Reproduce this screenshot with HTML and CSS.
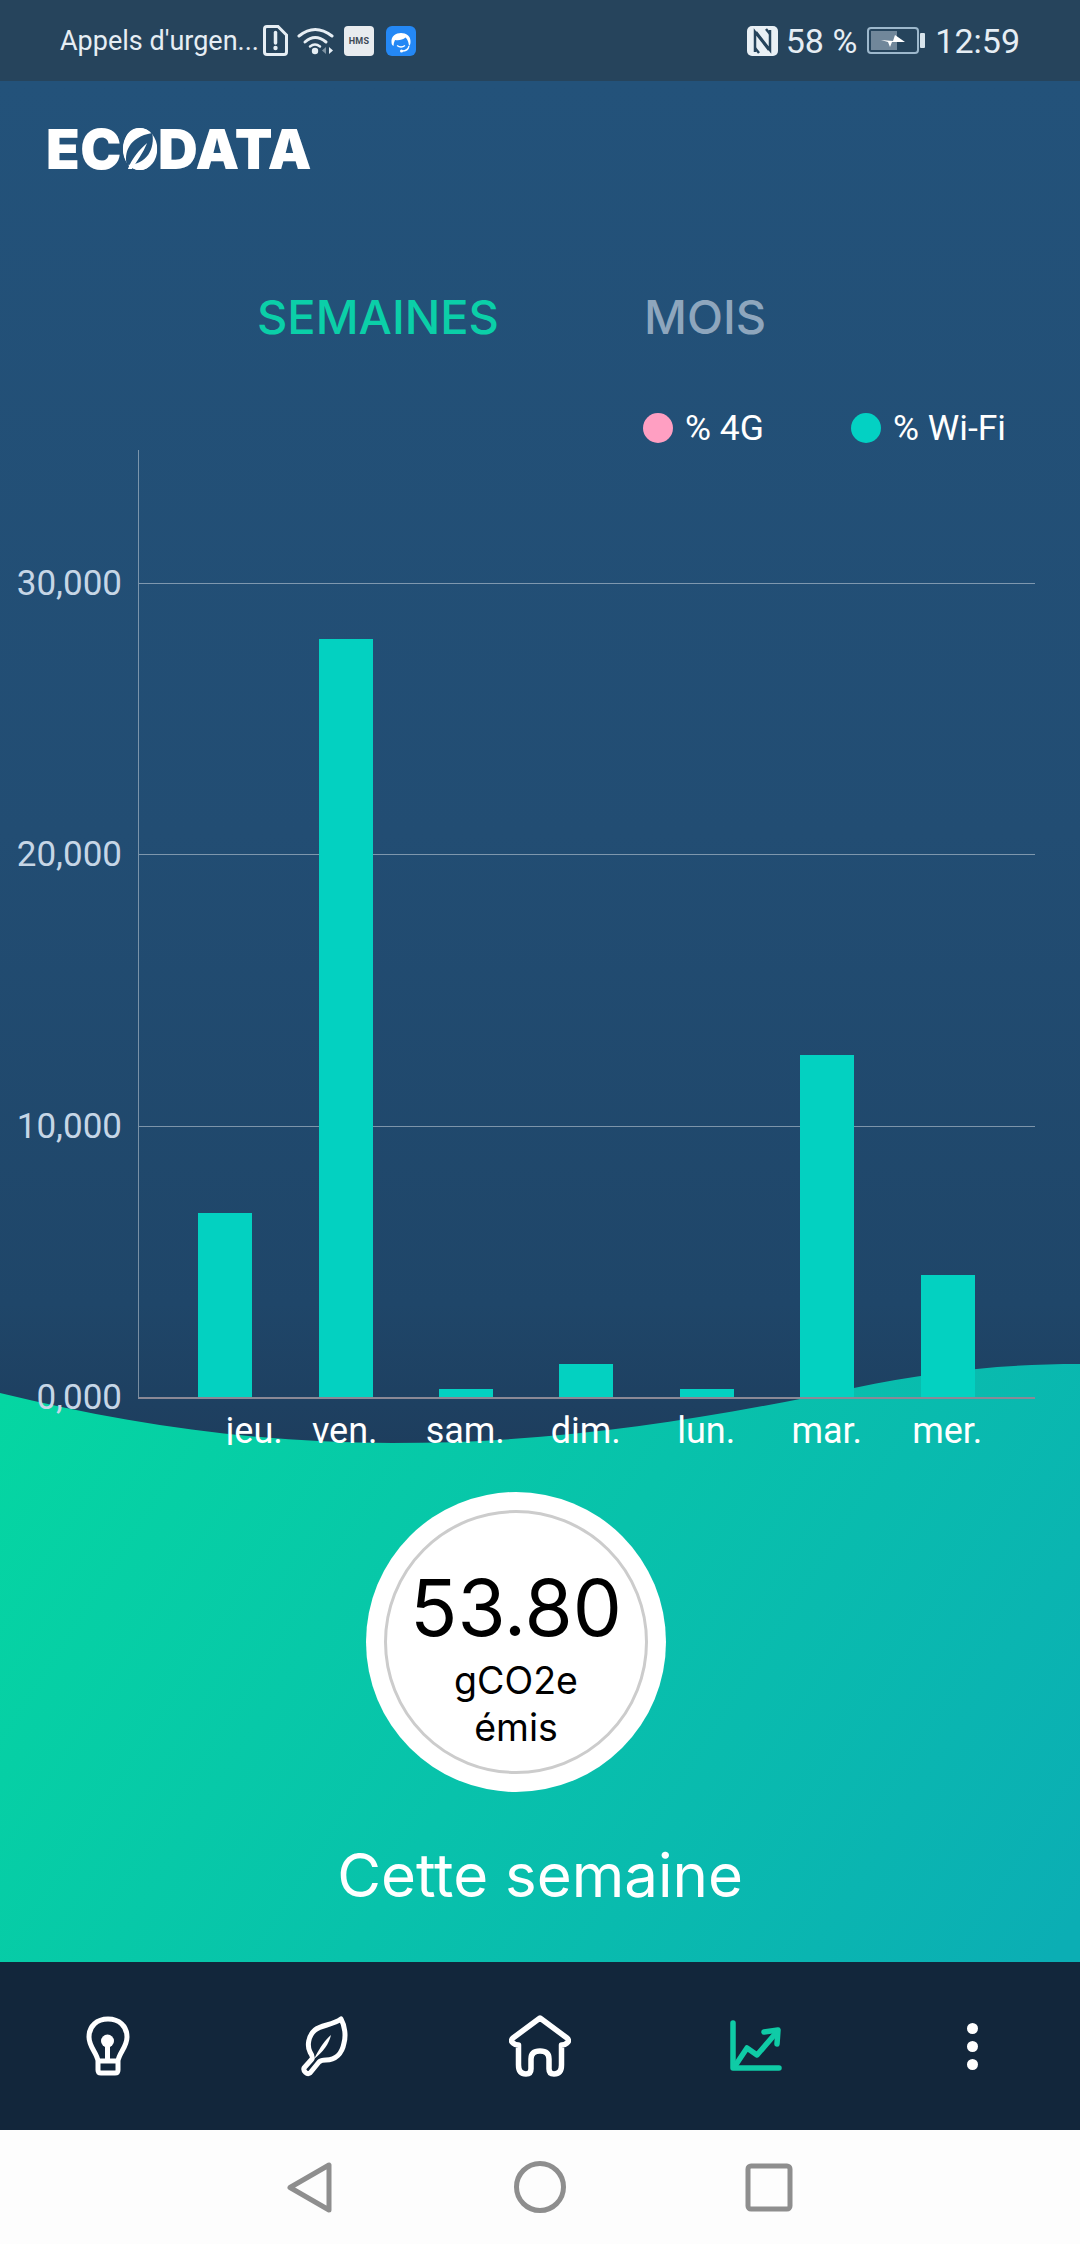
FILE: index.html
```html
<!DOCTYPE html>
<html lang="fr">
<head>
<meta charset="utf-8">
<title>Ecodata</title>
<link rel="stylesheet" href="styles.css">
</head>
<body>
<div class="phone">
  <div class="status">
    <div class="status-left">
      <span class="carrier">Appels d'urgen...</span>
      <svg class="ic-sim" viewBox="0 0 25 31"><path d="M4 1.5H15L23.5 10V27Q23.5 29.500 21 29.500H4Q1.500 29.500 1.500 27V4Q1.500 1.500 4 1.500Z" fill="none" stroke="#e6eef4" stroke-width="3"/><path d="M12.500 7.500V18" stroke="#e6eef4" stroke-width="3.500" stroke-linecap="round"/><circle cx="12.500" cy="23" r="2.200" fill="#e6eef4"/></svg>
      <svg class="ic-wifi" viewBox="0 0 37 29"><g fill="none" stroke="#e6eef4" stroke-width="3" stroke-linecap="round"><path d="M2 10Q18 -3 35 10"/><path d="M8 16Q18 7 29 16"/></g><path d="M13 20.500Q18 16.500 23 20.500" fill="none" stroke="#e6eef4" stroke-width="2.500" stroke-linecap="round"/><circle cx="18" cy="25" r="3.200" fill="#e6eef4"/><path d="M29 21V28L25 24.500Z" fill="#7f93a3"/><path d="M32 21V28L36 24.500Z" fill="#e6eef4"/></svg>
      <span class="ic-hms">HMS</span>
      <svg class="ic-app" viewBox="0 0 30 30"><rect width="30" height="30" rx="6" fill="#2488f5"/><path d="M5.500 16C4.500 4 25.500 4 24.500 16C24.500 18 24 19 23 20C22.500 15 21 13 19.500 11.500C17 14 12.500 14.500 9 14C8 16 7.500 18 7.500 20C6 19 5.500 18 5.500 16Z" fill="#fff"/><path d="M11 19.500Q15 22.500 19 19.500" fill="none" stroke="#fff" stroke-width="1.300"/><path d="M23 20Q22 25 16 25" fill="none" stroke="#fff" stroke-width="1.300"/><circle cx="15.500" cy="25" r="1.500" fill="#fff"/></svg>
    </div>
    <div class="status-right">
      <svg class="ic-nfc" viewBox="0 0 31 30"><rect width="31" height="30" rx="5" fill="#e9f0f5"/><g fill="none" stroke="#26445c" stroke-width="2.500"><path d="M8 26V6L22 24"/><path d="M12 27L8 22"/><path d="M23 4V24L9 6"/><path d="M19 3L23 8"/></g></svg>
      <span class="pct">58 %</span>
      <div class="battery"><div class="battery-body"><span class="battery-fill"></span><svg class="ic-bolt" viewBox="0 0 24 12"><path d="M0 5L12 6L14 0L24 7L11 7L9 12L7 7Z" fill="#fff"/></svg></div><span class="battery-nub"></span></div>
      <span class="clock">12:59</span>
    </div>
  </div>

  <main class="screen">
    <svg class="wave" viewBox="0 0 1080 1881" preserveAspectRatio="none">
      <defs><linearGradient id="waveFill" x1="0" y1="1320" x2="1000" y2="1960" gradientUnits="userSpaceOnUse"><stop offset="0" stop-color="#05d6a2"/><stop offset="1" stop-color="#0baeb4"/></linearGradient></defs>
      <path d="M0 1312C130 1344 260 1362 392 1362C560 1362 700 1339 854 1307C930 1291 1000 1283 1080 1283V1881H0Z" fill="url(#waveFill)"/>
    </svg>

    <div class="brand">EC<span class="brand-o">O<svg class="brand-leaf" viewBox="0 0 34 42" preserveAspectRatio="none"><ellipse cx="17" cy="21" rx="17" ry="21" fill="#fff"/><path d="M4 37C1 26 5 9 29 5C32 20 24 37 4 37Z" fill="#23527a"/><path d="M5 41C9 31 15 23 24 15C20 25 14 33 9 41Z" fill="#fff"/></svg></span>DATA</div>

    <div class="tabs">
      <span class="tab tab-active">SEMAINES</span>
      <span class="tab tab-idle">MOIS</span>
    </div>

    <div class="legend">
      <span class="legend-item legend-4g"><i class="dot dot-pink"></i>% 4G</span>
      <span class="legend-item"><i class="dot dot-teal"></i>% Wi-Fi</span>
    </div>

    <div class="chart">
      <div class="yaxis">
        <span>30,000</span><span>20,000</span><span>10,000</span><span>0,000</span>
      </div>
      <div class="plot">
        <div class="gridlines"><span></span><span></span><span></span></div>
        <div class="bar-cell"><span class="bar" style="height:184px"></span></div>
        <div class="bar-cell"><span class="bar" style="height:758px"></span></div>
        <div class="bar-cell"><span class="bar" style="height:8px"></span></div>
        <div class="bar-cell"><span class="bar" style="height:33px"></span></div>
        <div class="bar-cell"><span class="bar" style="height:8px"></span></div>
        <div class="bar-cell"><span class="bar" style="height:342px"></span></div>
        <div class="bar-cell"><span class="bar" style="height:122px"></span></div>
      </div>
    </div>

    <div class="xaxis">
      <span class="xlabel xlabel-first">jeu.</span>
      <span class="xlabel">ven.</span>
      <span class="xlabel">sam.</span>
      <span class="xlabel">dim.</span>
      <span class="xlabel">lun.</span>
      <span class="xlabel">mar.</span>
      <span class="xlabel">mer.</span>
    </div>

    <div class="stat">
      <div class="stat-ring">
        <span class="stat-value">53.80</span>
        <span class="stat-unit stat-unit-first">gCO2e</span>
        <span class="stat-unit">émis</span>
      </div>
    </div>

    <div class="caption">Cette semaine</div>
  </main>

  <nav class="nav">
    <div class="nav-item">
      <svg class="ic-bulb" viewBox="0 0 44 60"><g fill="none" stroke="#fff" stroke-width="5" stroke-linejoin="round"><path d="M12 45C11 37 3 31 3 21C3 10 11 3 22 3C33 3 41 10 41 21C41 31 33 37 32 45V54Q32 57 29 57H15Q12 57 12 54Z"/><path d="M12 45H32M21.500 30V45"/></g><circle cx="21.500" cy="25" r="6.500" fill="#fff"/></svg>
    </div>
    <div class="nav-item">
      <svg class="ic-leaf" viewBox="0 0 47 61"><path d="M40 3C44 10 45 20 43 27C41 38 34 44 25 44C22 44 20 44 18 46L9 57C6 59 2 55 3 52L11 43C12 41 11 39 9 36C6 30 7 20 14 14C20 9 32 9 40 3Z" fill="none" stroke="#fff" stroke-width="5" stroke-linejoin="round"/><path d="M13 43C19 31 24 24 30 19C28 28 22 36 13 43Z" fill="#fff"/></svg>
    </div>
    <div class="nav-item">
      <svg class="ic-house" viewBox="0 0 62 62"><path d="M31 3L4 23Q1 26 4 28Q6 30 9.500 30V50Q9.500 59 17 59Q22 59 22 54V44Q22 36 31 36Q40 36 40 44V54Q40 59 45 59Q52.500 59 52.500 50V30Q56 30 58 28Q61 26 58 23Z" fill="none" stroke="#fff" stroke-width="5.500" stroke-linejoin="round"/></svg>
    </div>
    <div class="nav-item">
      <svg class="ic-trend" viewBox="0 0 52 52"><g fill="none" stroke="#0fcba6" stroke-width="5.500" stroke-linecap="round" stroke-linejoin="round"><path d="M3 3V48H49"/><path d="M5 46L17 28L27 35L46 13"/><path d="M34 12L48 10L47 24"/></g></svg>
    </div>
    <div class="nav-item">
      <div class="kebab"><span></span><span></span><span></span></div>
    </div>
  </nav>

  <div class="sysbar">
    <svg class="sys-icon" viewBox="0 0 60 60"><path d="M49 8V53L10 30.500Z" fill="none" stroke="#8e8e8e" stroke-width="5" stroke-linejoin="round"/></svg>
    <svg class="sys-icon" viewBox="0 0 60 60"><circle cx="30" cy="30" r="23.500" fill="none" stroke="#8e8e8e" stroke-width="5"/></svg>
    <svg class="sys-icon" viewBox="0 0 60 60"><rect x="8" y="9" width="42" height="43" rx="3" fill="none" stroke="#8e8e8e" stroke-width="5"/></svg>
  </div>
</div>
</body>
</html>
```
FILE: styles.css
```css
* { box-sizing: border-box; }
html, body { margin: 0; padding: 0; }
body { width: 1080px; height: 2244px; overflow: hidden; font-family: "Roboto", sans-serif; background: #fdfdfd; }
.phone { display: flex; flex-direction: column; width: 1080px; height: 2244px; }

.status { flex: 0 0 81px; display: flex; justify-content: space-between; align-items: center; padding: 0 60px; background: #26445c; color: #e6eef4; }
.status-left, .status-right { display: flex; align-items: center; }
.carrier { font-size: 27px; width: 203px; white-space: nowrap; }
.ic-sim { width: 25px; height: 31px; margin-right: 9px; }
.ic-wifi { width: 37px; height: 29px; margin-right: 10px; }
.ic-hms { width: 30px; height: 30px; margin-right: 12px; border-radius: 4px; background: #e8ecef; color: #3e4a56; font-size: 9px; font-weight: 700; display: flex; align-items: center; justify-content: center; letter-spacing: .3px; }
.ic-app { width: 30px; height: 30px; }
.ic-nfc { width: 31px; height: 30px; }
.pct { font-size: 34px; margin-left: 8px; white-space: nowrap; }
.battery { display: flex; align-items: center; margin-left: 10px; margin-right: 10px; }
.battery-body { position: relative; width: 52px; height: 27px; border: 2px solid #9db8cc; border-radius: 4px; padding: 2px; }
.battery-fill { display: block; width: 26px; height: 100%; background: #71879a; }
.ic-bolt { position: absolute; left: 12px; top: 6px; width: 24px; height: 12px; }
.battery-nub { width: 5px; height: 15px; margin-left: 1px; background: #d8e4ec; border-radius: 1px; }
.clock { font-size: 34px; }

.screen { position: relative; flex: 0 0 1881px; display: flex; flex-direction: column; background: linear-gradient(180deg, #23527a 0%, #224d73 40%, #1f4669 65%, #1d3b5a 75%); overflow: hidden; }
.wave { position: absolute; left: 0; top: 0; width: 1080px; height: 1881px; }
.screen > :not(.wave) { position: relative; }

.brand { margin: 44px 0 0 46px; height: 48px; line-height: 48px; font-family: "Inter", sans-serif; font-weight: 900; font-size: 55px; color: #fff; letter-spacing: .5px; }
.brand-o { position: relative; display: inline-block; transform: scaleX(.82); transform-origin: left center; margin-right: -7px; }
.brand-leaf { position: absolute; left: 1px; top: 3px; width: 42px; height: 42px; }

.tabs { display: flex; height: 60px; margin-top: 113px; padding-left: 257px; align-items: center; font-family: "Inter", sans-serif; font-size: 47px; font-weight: 500; }
.tab-active { color: #0bcfa8; width: 387px; }
.tab-idle { color: #8ea6bd; }

.legend { display: flex; height: 40px; margin-top: 62px; padding-left: 643px; align-items: center; color: #fff; font-size: 35.500px; }
.legend-item { display: flex; align-items: center; }
.legend-4g { width: 208px; }
.dot { width: 30px; height: 30px; border-radius: 50%; margin-right: 12px; }
.dot-pink { background: #ff9fc2; }
.dot-teal { background: #03d1c3; }

.chart { display: flex; margin-top: 2px; height: 949px; }
.yaxis { flex: 0 0 138px; height: 969px; display: flex; flex-direction: column; justify-content: flex-end; align-items: flex-end; gap: 229.300px; padding-right: 16px; color: #c6d6e6; font-size: 35px; line-height: 42px; }
.plot { position: relative; flex: 0 0 897px; display: flex; align-items: flex-end; padding: 0 27px 0 26px; border-left: 1px solid rgba(255,255,255,.4); border-bottom: 2px solid #8b8996; }
.gridlines { position: absolute; left: 0; right: 0; bottom: 0; display: flex; flex-direction: column; }
.gridlines span { height: 271.300px; border-top: 1px solid rgba(255,255,255,.42); }
.bar-cell { position: relative; flex: 1; display: flex; justify-content: center; align-items: flex-end; }
.bar { width: 54px; background: #03d1c1; }

.xaxis { display: flex; height: 46px; margin-left: 164px; width: 844px; padding-top: 19px; overflow: hidden; color: #fff; font-size: 36px; line-height: 27px; }
.xlabel { flex: 0 0 120.500px; text-align: center; }
.xlabel-first { padding-left: 60px; }

.stat { width: 300px; height: 300px; margin: 47px 0 0 366px; border-radius: 50%; background: #fff; display: flex; align-items: center; justify-content: center; }
.stat-ring { width: 264px; height: 264px; border: 3px solid #cccccc; border-radius: 50%; display: flex; flex-direction: column; align-items: center; justify-content: flex-start; font-family: "Inter", sans-serif; color: #000; padding-top: 52px; }
.stat-value { font-size: 78px; line-height: 86px; }
.stat-unit { font-size: 37.500px; line-height: 47px; }
.stat-unit-first { margin-top: 6px; }

.caption { margin-top: 47px; text-align: center; font-family: "Inter", sans-serif; font-size: 60px; line-height: 72px; color: #fff; }

.nav { flex: 0 0 168px; display: flex; align-items: center; background: #12263b; }
.nav-item { flex: 0 0 216px; display: flex; justify-content: center; align-items: center; }
.ic-bulb { width: 44px; height: 60px; }
.ic-leaf { width: 47px; height: 61px; }
.ic-house { width: 62px; height: 62px; }
.ic-trend { width: 52px; height: 52px; }
.kebab { display: flex; flex-direction: column; gap: 7px; }
.kebab span { width: 11px; height: 11px; border-radius: 50%; background: #fff; }

.sysbar { flex: 0 0 114px; display: flex; justify-content: center; align-items: center; gap: 170px; background: #fdfdfd; }
.sys-icon { width: 60px; height: 60px; }
```
